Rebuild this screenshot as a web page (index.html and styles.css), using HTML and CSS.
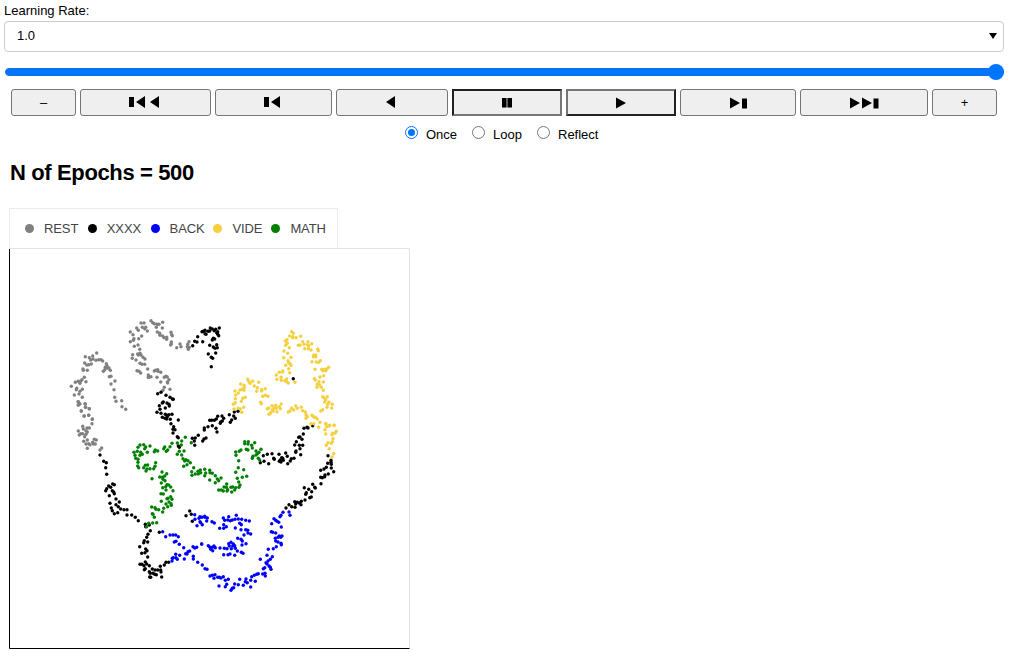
FILE: index.html
```html
<!DOCTYPE html>
<html lang="en">
<head>
<meta charset="utf-8">
<title>N of Epochs</title>
<link rel="stylesheet" href="styles.css">
</head>
<body>
<main class="app">
  <label class="field-label" for="rate">Learning Rate:</label>
  <div class="select" id="rate"><span>1.0</span><svg class="caret" viewBox="0 0 8 6"><path d="M0 0H8L4 6z"/></svg></div>
  <div class="slider"><div class="track"></div><div class="thumb"></div></div>
  <div class="buttons">
    <button class="btn">–</button>
    <button class="btn back-icon"><svg width="30" height="12"><path d="M0 1h5v10H0zM16 0v12L7 6zM30 0v12L21 6z"/></svg></button>
    <button class="btn back-icon"><svg width="16" height="12"><path d="M0 1h5v10H0zM16 0v12L7 6z"/></svg></button>
    <button class="btn back-icon"><svg width="9" height="12"><path d="M9 0v12L0 6z"/></svg></button>
    <button class="btn pressed"><svg width="10" height="10"><path d="M0 0h4.600v9.500H0zM5.400 0h4.600v9.500H5.400z"/></svg></button>
    <button class="btn raised"><svg width="10" height="12"><path d="M0 .5v11L10 6z"/></svg></button>
    <button class="btn"><svg width="17" height="12"><path d="M0 .5v11L10 6zM12 1.500h5v10h-5z"/></svg></button>
    <button class="btn"><svg width="29" height="12"><path d="M0 .5v11L10 6zM12 .5v11L22 6zM23.500 1.500h5v10h-5z"/></svg></button>
    <button class="btn">+</button>
  </div>
  <div class="modes">
    <label class="mode"><span class="radio checked"></span>Once</label>
    <label class="mode"><span class="radio"></span>Loop</label>
    <label class="mode"><span class="radio"></span>Reflect</label>
  </div>
  <h1 class="title">N of Epochs = 500</h1>
  <div class="legend">
    <span class="key rest">REST</span><span class="key xxxx">XXXX</span><span class="key back">BACK</span><span class="key vide">VIDE</span><span class="key math">MATH</span>
  </div>
  <svg class="plot" id="plot" viewBox="9 248 401 401"></svg>
</main>
<script src="plot.js"></script>
</body>
</html>
```
FILE: styles.css
```css
* { box-sizing: border-box; }
body { margin: 0; background: #fff; color: #000; font-family: "Liberation Sans", Arial, sans-serif; font-size: 13px; }
.app { display: flex; flex-direction: column; align-items: flex-start; height: 656px; overflow: hidden; }
.field-label { margin: 3px 0 0 4px; height: 18px; line-height: 16px; }
.select { margin-left: 4px; width: 1000px; height: 31px; border: 1px solid #ccc; border-radius: 4px; padding: 0 6px 2px 12px; display: flex; align-items: center; justify-content: space-between; }
.caret { width: 8px; height: 6px; }
.slider { margin: 12px 0 0 5px; width: 999px; height: 16px; display: grid; align-items: center; }
.track, .thumb { grid-area: 1 / 1; }
.track { height: 8px; border-radius: 4px; background: #0075ff; border: 1px solid #176fd8; }
.thumb { width: 16px; height: 16px; border-radius: 50%; background: #0075ff; justify-self: end; }
.buttons { margin: 9px 0 0 11px; display: grid; grid-template-columns: 65px 131px 117px 112px 110px 110px 116px 128px 65px; gap: 4px; height: 27px; }
.btn { display: flex; align-items: center; justify-content: center; padding: 0; background: #efefef; border: 1px solid #767676; border-radius: 3px; font: 13px "Liberation Sans", Arial, sans-serif; color: #000; }
.btn svg { display: block; }
.back-icon { padding: 0 3px 1px 0; }
.pressed { border: 2px solid; border-color: #212121 #767676 #767676 #212121; border-radius: 0; }
.raised { border: 2px solid; border-color: #767676 #212121 #212121 #767676; border-radius: 0; }
.modes { margin: 9px 0 0 405px; height: 18px; display: flex; gap: 15px; }
.mode { display: flex; line-height: 19px; }
.radio { width: 13px; height: 13px; margin: 1px 8px 0 0; border: 1px solid #767676; border-radius: 50%; }
.checked { border-color: #0075ff; background: #0075ff; background-clip: content-box; padding: 2px; }
.title { margin: 17px 0 0 10px; height: 25px; line-height: 26px; font-size: 22px; letter-spacing: -0.37px; }
.legend { margin: 23px 0 0 9px; width: 329px; height: 41px; border: 1px solid #ebebeb; border-bottom: 0; display: flex; align-items: center; padding: 0 0 1px 15px; color: #444; }
.key { display: flex; align-items: center; width: 62.800px; letter-spacing: -0.1px; }
.key::before { content: ""; width: 9px; height: 9px; border-radius: 50%; margin-right: 10px; flex: none; }
.vide { width: 58px; }
.rest::before { background: #808080; }
.xxxx::before { background: #000; }
.back::before { background: #00f; }
.vide::before { background: #f4d03f; }
.math::before { background: #008000; }
.plot { margin: -1px 0 0 9px; width: 401px; height: 401px; flex: none; }
.frame { fill: none; stroke: #e3e3e3; }
.axis { fill: none; stroke: #000; }
```
FILE: plot.js
```js
// Each series segment: colour, origin x, origin y, then offsets from it in thirds of a pixel.
const segments = [
["#808080",60,310,"76,140 110,129 98,138 88,143 92,150 99,147 74,159 80,165 86,164 94,162 108,151 116,149 123,149 128,153 69,177 70,181 82,181 139,161 141,167 136,172 142,174 134,179 130,184 147,174 151,181 148,200 153,199 165,213 153,222 162,239 164,262 168,274 185,272 186,290 197,298 73,202 66,209 62,213 78,215 46,217 54,214 60,220 34,229 50,235 49,239 67,238 60,244 43,255 57,252 67,262 56,276 55,285 60,282 75,281 77,292 88,296 64,303 73,318 86,316 97,327 211,66 219,74 211,95 220,91 222,86 230,54 235,61 243,39 252,39 247,52 257,52 254,56 262,63 236,86 245,78 223,109 234,105 239,118 218,134 217,145 233,132 240,130 235,135 243,135 249,142 255,147 228,150 240,160 246,163 254,163 263,177 231,182 237,184 242,189 265,195 267,202 265,202"],
["#808080",150,310,"3,32 8,38 13,41 21,43 27,43 38,37 19,52 37,54 22,66 29,70 30,76 38,78 42,83 50,82 50,88 63,67 65,74 67,77 64,96 62,105 64,101 80,113 90,102 93,110 117,95 113,103 112,110 115,118 118,112 3,200 13,183 17,181 23,179 24,184 32,187 21,202 32,216 43,202 48,199 52,201 57,209 52,216 43,232 53,219 60,238 39,241"],
["#808080",60,400,"54,5 55,15 76,12 76,22 88,26 64,33 72,48 86,46 97,58 96,71 68,79 70,87 81,84 88,84 78,92 82,96 55,93 62,101 58,105 68,101 78,103 74,110 71,124 82,120 78,132 86,131 90,134 82,145 98,127 103,118 109,120 100,132 106,132 125,144 120,150"],
["#000",150,310,"128,107 134,94 141,96 143,80 158,95 156,65 160,64 165,61 165,71 168,73 174,64 179,63 181,54 187,57 193,62 197,58 203,65 208,54 200,68 203,73 206,77 190,85 187,90 194,87 179,106 200,104 190,111 195,115 202,113 197,129 175,132 184,142 188,145 184,170"],
["#000",150,390,"23,11 33,7 48,16 60,22 67,27 70,28 40,36 28,47 37,39 51,39 57,43 58,48 46,54 21,67 30,58 33,70 37,82 46,73 51,76 57,74 66,73 52,80 45,85 50,87 61,88 85,90 63,101 71,110 69,118 75,119 69,129 82,140 85,143 85,168 88,172 127,145 136,144 145,136 133,153 134,166 158,153 162,147 168,144 163,114 163,120 174,110 187,107 179,91 185,91 193,91 199,87 203,79 216,78 221,85 212,96 217,93 211,100 198,115 201,126 253,66 264,64 238,74 251,78 256,85 245,90 241,97"],
["#000",60,400,"120,165 131,184 139,188 137,203 140,223 146,258 158,252 163,254 152,262 140,266 137,272 157,272 163,281 161,276 148,287 168,297 150,310 178,306 168,314 175,320 154,324 182,327 192,329 201,329 157,332 163,341 173,338"],
["#000",120,490,"21,75 35,75 46,82 55,92 76,103 77,110 88,105 91,122 84,133 80,142 73,152 71,158 83,156 59,170 77,177 81,182 65,190 75,188 83,201 76,216 60,223 66,223 72,227 80,222 88,227 76,236 73,239 97,237 105,240 88,245 91,250 99,250 104,253 113,240 122,240 109,254 123,246 89,261 92,262 125,261 121,229 133,225 138,217 146,217 118,127 209,63 198,77 214,73 217,94"],
["#000",230,400,"168,324 177,314 185,320 195,322 194,305 197,312 202,307 208,309 213,314 214,304 225,300 239,293 244,291 227,283 229,278 223,263 236,268 245,275 248,253 256,264 254,262 273,251 272,232 277,233 284,230 285,225 295,222 272,211 282,207 289,202 293,190 303,187 303,181 304,193 304,204 311,215 294,167 212,164 197,157 198,153 210,146 218,136 208,136 194,135 199,125 206,112 210,111 216,118 220,102 222,85 231,82 234,84 248,77 91,188 100,167 112,163 126,161 102,184 116,191 131,175 133,178 147,163 148,184 155,173 151,180 158,175 160,181 153,186 167,159 172,169 173,191 181,183 184,176 192,175"],
["#00f",120,490,"128,125 137,140 150,135 159,135 167,135 175,140 163,156 168,154 178,163 191,173 197,191 204,185 201,192 209,183 219,170 224,174 230,172 245,162 193,207 179,196 167,193 168,203 160,203 172,208 156,213 157,205 220,199 220,207 233,217 224,74 225,88 237,85 231,107 240,95 246,82 255,82"],
["#00f",200,490,"0,80 14,79 22,84 20,93 2,98 7,104 36,95 43,99 59,115 70,84 74,91 71,104 79,110 71,115 86,80 83,90 91,92 97,90 109,76 105,88 115,87 125,88 137,91 148,93 119,100 124,104 106,114 123,119 137,119 143,121 144,129 152,132 132,135 113,145 123,148 127,153 138,161 93,157 100,162 86,161 88,168 98,168 104,167 106,175 112,183 126,165 94,176 73,175 81,176 60,174 71,194 84,194 90,192 104,196 124,187 129,190 42,168 46,173 37,172 30,172 32,178 38,182 5,162 25,167 7,225 15,236 21,238 30,258 37,256 45,254 42,265 53,262 58,262 63,264 70,260 76,271 85,268 57,288 80,283 76,290 93,301 97,295 101,293 104,282 115,284 119,268 138,267 136,275 130,286 142,278 152,291 152,271 155,260 163,256 166,274 170,253 175,251 188,252 195,250 196,258 190,236 194,233 201,222 198,218 207,228 211,232 213,238 204,213 211,208 217,200 201,196 181,208 205,178 220,176 229,170 244,164 243,160 227,153 226,145 234,156 234,142 238,138 246,138 242,142 227,129 218,127 214,125 244,111 215,101 222,86 227,91 231,94 236,97 240,80 243,76 249,67 267,66 270,76"],
["#f4d03f",225,320,"200,35 205,40 194,48 204,50 203,53 214,53 227,49 186,59 181,63 187,70 182,76 177,93 193,83 188,100 176,113 198,112 189,122 191,128 195,131 198,136 182,136 191,146 194,158 220,76 225,75 233,65 249,65 260,71 237,73 248,74 251,77 250,86 239,86 258,90 278,87 280,92 266,106 272,105 265,110 272,110 261,125 274,126 286,122 281,127 270,148 290,148 299,148 311,142 306,146 302,152 294,152 296,167 285,171 268,176 271,180 282,185 295,186 277,193 284,195 289,202 276,202 295,211 154,165 163,157 173,153 173,156 156,178 168,172 169,181 179,182 185,177 185,185 190,189 210,187 293,230 307,230 297,234 302,239 299,246 312,247 308,253 306,262 320,264 322,253 293,269 287,273 68,178 71,184 83,184 75,190 101,187 88,198 97,203 95,214 121,206 110,209 110,213 47,192 57,196 58,202 45,210 57,211 30,213 40,219 51,208 32,225 31,236 53,235 61,232 49,244 31,248 25,253 56,262 39,265 27,267 46,267 50,277 113,229 121,226 129,229 107,247 109,251 131,264 127,266 141,257 152,256 147,264 142,269 154,265 166,266 169,252 163,260 137,278 132,283 145,273 156,275 190,276 200,265 212,258 217,265 195,273 206,270 229,262 233,272 241,276 243,284 247,290 243,295 261,286 266,291 271,292 277,297 285,307 258,311 266,311 302,311 305,320 313,318 327,316 281,322"],
["#f4d03f",230,400,"285,89 287,102 288,72 299,76 313,76 319,94 316,99 308,100 306,104 309,116 307,125 294,128 289,136 304,130 298,146 311,161 306,171"],
["#008000",60,400,"240,135 251,134 234,142 257,141 270,138 262,157 254,146 222,157 225,166 232,154 242,157 247,163 240,166 227,175 234,178 234,187 233,198 236,203 251,203 256,196 263,195 261,207 258,213 270,206 285,199 287,188 281,206 276,236"],
["#008000",150,390,"106,142 95,153 66,160 82,159 94,165 124,158 60,170 44,171 41,176 53,180 49,184 16,180 13,185 23,183 88,184 102,183 82,193 95,195 99,206 108,209 104,213 114,212 121,218 111,224 101,229 131,233 125,245 126,256 136,252 144,244 151,240 145,252 152,248 164,238 167,249 164,257 179,241 180,248 187,250 196,257 179,270 196,278 202,267 206,272 213,264 206,300 214,300 220,303 230,282 222,291 229,292 233,299 231,303 243,292 248,291 245,306 257,293 254,300 267,292 270,285 266,276 262,265 277,262 290,259 281,239 265,233 266,212 257,247 257,186 258,196 268,184 273,180 284,155 284,161 295,155 294,162 289,178 294,180 305,166 307,174 314,158 318,183 309,199 318,195 325,205 307,205 327,187 333,178 322,191 329,210 36,246 50,251 29,261 37,262 44,258 39,268 45,272 34,279 51,284 47,290 56,285 62,291 69,302 48,300 38,293 33,311 40,312 62,320 54,325"],
["#008000",120,490,"124,34 141,26 156,28 138,42 147,36 153,41 143,50 154,46 95,51 105,53 108,58 116,59 131,55 128,66 97,71 103,82 99,73 86,100 98,99 110,98 80,110"],
["#000",225,320,"205,176"]
];

const plot = document.getElementById("plot");
let dots = "";
for (const [color, x0, y0, pts] of segments) {
  for (const p of pts.split(" ")) {
    const [x, y] = p.split(",");
    dots += `<circle cx="${(x0 + x / 3).toFixed(1)}" cy="${(y0 + y / 3).toFixed(1)}" r="1.7" fill="${color}"/>`;
  }
}
plot.innerHTML = '<path class="frame" d="M9.500 248.500H409.500V648.500"/><path class="axis" d="M9.500 249V648.500H409.500"/>' + dots;
```
